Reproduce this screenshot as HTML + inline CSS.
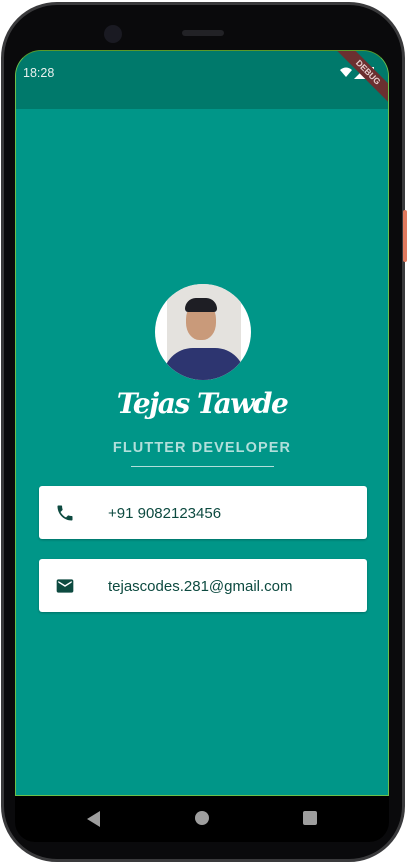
<!DOCTYPE html>
<html><head><meta charset="utf-8"><style>
*{margin:0;padding:0;box-sizing:border-box}
body{width:407px;height:864px;background:#fff;position:relative;overflow:hidden;font-family:"Liberation Sans",sans-serif}
.phone{position:absolute;left:1px;top:2px;width:404px;height:860px;background:#0a0a0c;border-radius:56px;border:3px solid #3a3a3c}
.btn{position:absolute;left:403px;top:210px;width:4px;height:52px;background:#e07a5f;border-radius:2px}
.screen{position:absolute;left:15px;top:50px;width:374px;height:746px;background:#009688;border-radius:26px 26px 0 0;overflow:hidden;border:1px solid #6cc04a;border-top-color:#5a9a2a}
.status{position:absolute;left:0;top:0;width:100%;height:58px;background:#00796b}
.time{position:absolute;left:7px;top:15px;color:#e8f0ee;font-size:12.5px}
.nav{position:absolute;left:15px;top:796px;width:374px;height:46px;background:#000;border-radius:0 0 20px 20px}
.cam{position:absolute;left:104px;top:25px;width:18px;height:18px;border-radius:50%;background:#1a1a22}
.spk{position:absolute;left:182px;top:30px;width:42px;height:6px;border-radius:3px;background:#222226}
.avatar{position:absolute;left:139px;top:233px;width:96px;height:96px;border-radius:50%;background:#fff;overflow:hidden}
.card{position:absolute;left:23px;width:328px;height:53px;background:#fff;border-radius:3px;box-shadow:0 1px 2px rgba(0,0,0,.25)}
.card span{position:absolute;left:69px;top:19px;color:#0d4a40;font-family:"Liberation Sans",sans-serif;font-size:15px}
.card svg{position:absolute;left:16px;top:17px}
</style></head><body>
<div class="phone"></div><div class="btn"></div>
<div class="cam"></div><div class="spk"></div>
<div class="screen">
 <div class="status"><div class="time">18:28</div>
  <svg style="position:absolute;left:322px;top:14px" width="40" height="16"><path d="M2 5 Q8 0 14 5 L8 12Z" fill="#fff"/><path d="M16 14 L28 2 L28 14Z" fill="#fff"/><rect x="30" y="2" width="6" height="12" fill="#fff"/></svg>
  <div style="position:absolute;left:312px;top:15px;width:80px;height:13px;background:#6b3030;transform:rotate(45deg);color:#e8d0d0;font-size:8.5px;font-weight:bold;text-align:center;line-height:13px">DEBUG</div>
 </div>
 <div class="avatar">
  <div style="position:absolute;left:12px;top:0;width:74px;height:96px;background:#e4e2de"></div>
  <div style="position:absolute;left:8px;top:64px;width:82px;height:40px;background:#2d3570;border-radius:30px 30px 0 0"></div>
  <div style="position:absolute;left:31px;top:18px;width:30px;height:38px;background:#c99a7a;border-radius:45%"></div>
  <div style="position:absolute;left:30px;top:14px;width:32px;height:14px;background:#1e1e24;border-radius:14px 14px 4px 4px"></div>
 </div>
 <div style="position:absolute;left:0;width:100%;top:336px;text-align:center;color:#fff;font-family:'DejaVu Serif','Liberation Serif',cursive;font-style:italic;font-weight:bold;font-size:28px;letter-spacing:-1.5px">Tejas Tawde</div>
 <div style="position:absolute;left:0;width:100%;top:389px;text-align:center;color:#b2dfdb;font-weight:bold;font-size:14.5px;letter-spacing:1.1px">FLUTTER DEVELOPER</div>
 <div style="position:absolute;left:115px;top:415px;width:143px;height:1px;background:#b2dfdb"></div>
 <div class="card" style="top:435px"><svg width="20" height="20" viewBox="0 0 24 24"><path fill="#0d4a40" d="M6.6 10.8c1.4 2.8 3.8 5.1 6.6 6.6l2.2-2.2c.3-.3.7-.4 1-.2 1.1.4 2.3.6 3.6.6.6 0 1 .4 1 1V20c0 .6-.4 1-1 1C10.6 21 3 13.4 3 4c0-.6.4-1 1-1h3.5c.6 0 1 .4 1 1 0 1.3.2 2.5.6 3.6.1.3 0 .7-.2 1z"/></svg><span>+91 9082123456</span></div>
 <div class="card" style="top:508px"><svg width="20" height="20" viewBox="0 0 24 24"><path fill="#0d4a40" d="M20 4H4c-1.1 0-2 .9-2 2v12c0 1.1.9 2 2 2h16c1.1 0 2-.9 2-2V6c0-1.1-.9-2-2-2zm0 4l-8 5-8-5V6l8 5 8-5v2z"/></svg><span>tejascodes.281@gmail.com</span></div>
</div>
<div class="nav">
 <svg style="position:absolute;left:71px;top:14px" width="18" height="18"><path d="M14 1 L14 17 L1 9Z" fill="#9e9e9e"/></svg>
 <div style="position:absolute;left:180px;top:15px;width:14px;height:14px;border-radius:50%;background:#9e9e9e"></div>
 <div style="position:absolute;left:288px;top:15px;width:14px;height:14px;border-radius:2px;background:#9e9e9e"></div>
</div>
</body></html>
